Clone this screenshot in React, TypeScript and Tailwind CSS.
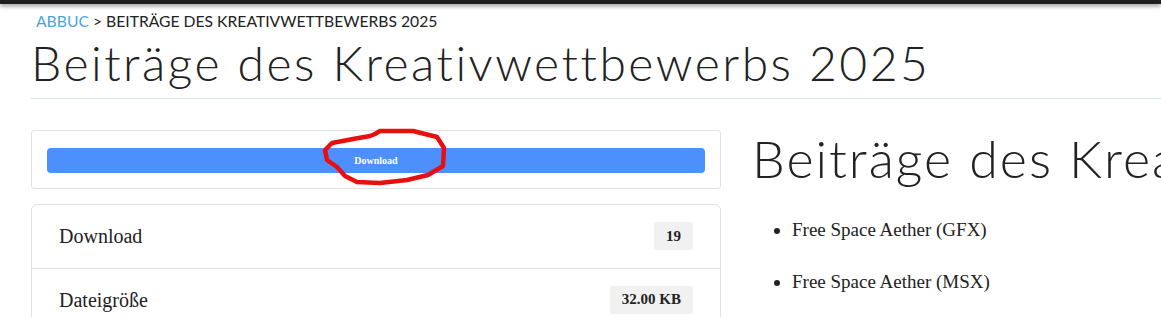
import React from 'react';

const stats = [
  { label: 'Download', value: '19' },
  { label: 'Dateigröße', value: '32.00 KB' },
];

const entries = ['Free Space Aether (GFX)', 'Free Space Aether (MSX)'];

export default function App() {
  return (
    <div className="relative w-full h-[317px] overflow-hidden bg-white text-[#222]">
      {/* top bar */}
      <div className="h-[4px] bg-[#1e1e1e] shadow-[0_2px_4px_rgba(0,0,0,0.45)]" />

      <div className="w-[1600px] pl-[31px]">
        {/* breadcrumb */}
        <div className="mt-[5px] pl-[5px] text-[15.7px] leading-[24px] uppercase font-['Lato',sans-serif] text-[#222]">
          <a className="text-[#4fa3d8]">ABBUC</a> &gt; Beiträge des Kreativwettbewerbs 2025
        </div>

        <h1 className="mt-[1px] pb-[6px] border-b border-[#d5e3ec] text-[48px] leading-[1.2] tracking-[0.052em] font-light font-['Lato',sans-serif]">
          Beiträge des Kreativwettbewerbs 2025
        </h1>

        <div className="mt-[31px] flex gap-[31px]">
          {/* left column */}
          <div className="w-[690px] shrink-0">
            <div className="border border-[#e2e2e2] rounded-[3px] p-[15px]">
              <button className="w-full h-[25px] rounded-[4px] bg-[#4d8ffd] text-white text-[10px] font-bold font-['Liberation_Serif',serif]">
                Download
              </button>
            </div>

            <div className="mt-[15px] border border-[#e2e2e2] rounded-[6px]">
              {stats.map((s, i) => (
                <div
                  key={s.label}
                  className={`flex items-center justify-between h-[63px] pl-[27px] pr-[27px] ${i > 0 ? 'border-t border-[#e2e2e2]' : ''}`}
                >
                  <span className="text-[20px] font-['Liberation_Serif',serif]">{s.label}</span>
                  <span className="h-[28px] px-[12px] flex items-center rounded-[3px] bg-[#f1f1f1] text-[15px] font-bold font-['Liberation_Serif',serif]">
                    {s.value}
                  </span>
                </div>
              ))}
            </div>
          </div>

          {/* right column */}
          <div className="flex-1">
            <h2 className="text-[52px] leading-[1.1] tracking-[0.038em] font-light font-['Lato',sans-serif] whitespace-nowrap">
              Beiträge des Kreativwettbewerbs 2025
            </h2>
            <ul className="mt-[29px] pl-[40px] list-disc text-[19px] leading-[28px] font-['Liberation_Serif',serif]">
              {entries.map((e) => (
                <li key={e} className="mb-[24px]">{e}</li>
              ))}
            </ul>
          </div>
        </div>
      </div>

      {/* red annotation */}
      <svg className="absolute left-0 top-0 pointer-events-none" width="1161" height="317">
        <path
          d="M375 134 L380 131 L413 131 L437 137 L444 148 L443 166 L428 175 L407 180 L380 183 L357 182 L345 176 L337 167 L327 160 L325 150 L332 143 L353 139 L370 136 Z"
          fill="none"
          stroke="#e8100f"
          strokeWidth="4.5"
          strokeLinejoin="round"
        />
      </svg>
    </div>
  );
}
